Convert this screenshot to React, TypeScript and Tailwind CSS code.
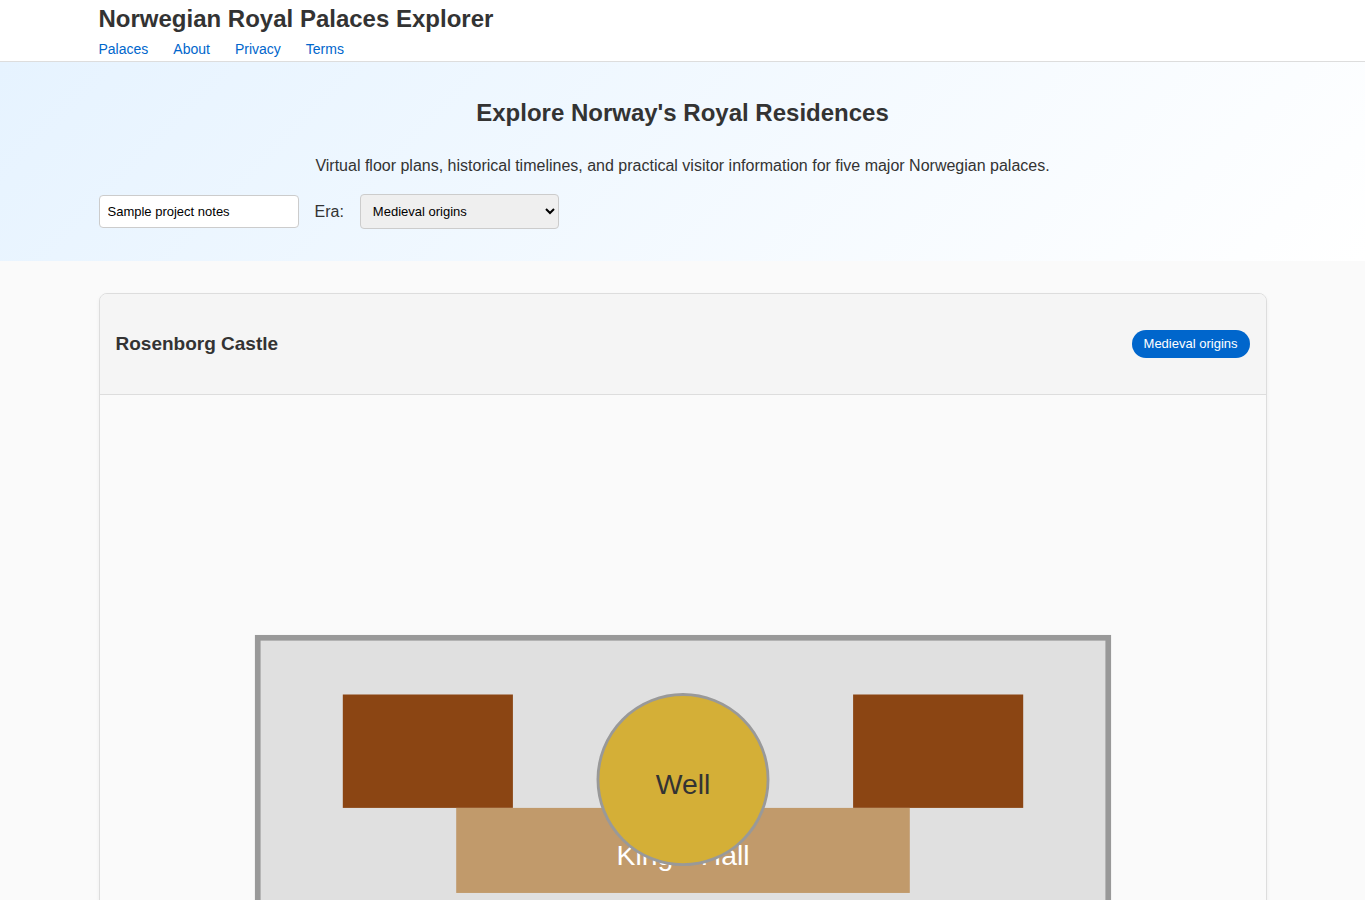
import { useState } from "react";

const NAV_LINKS = [
  { label: "Palaces", href: "#palaces" },
  { label: "About", href: "#about" },
  { label: "Privacy", href: "#privacy" },
  { label: "Terms", href: "#terms" },
];

const ERAS = ["Medieval origins", "Renaissance", "Baroque", "Modern era"];

function Header() {
  return (
    <header className="border-b border-[#dddddd] bg-white">
      <div className="mx-auto max-w-[1200px] px-4">
        <h1 className="text-2xl leading-[38px] font-bold">
          Norwegian Royal Palaces Explorer
        </h1>
        <nav className="flex gap-[25px] text-sm leading-[23px]">
          {NAV_LINKS.map((link) => (
            <a key={link.label} href={link.href} className="text-[#0066cc] hover:underline">
              {link.label}
            </a>
          ))}
        </nav>
      </div>
    </header>
  );
}

interface HeroProps {
  query: string;
  era: string;
  onQueryChange: (value: string) => void;
  onEraChange: (value: string) => void;
}

function Hero({ query, era, onQueryChange, onEraChange }: HeroProps) {
  return (
    <section className="bg-linear-[135deg] from-[#e6f3ff] to-white py-8">
      <div className="mx-auto max-w-[1200px] px-4">
        <h2 className="text-center text-2xl leading-[38px] font-bold">
          Explore Norway's Royal Residences
        </h2>
        <p className="mt-5 mb-3.5 text-center text-base leading-7">
          Virtual floor plans, historical timelines, and practical visitor information for five
          major Norwegian palaces.
        </p>
        <div className="flex flex-wrap items-center gap-4">
          <input
            type="text"
            aria-label="Search palaces"
            value={query}
            onChange={(e) => onQueryChange(e.target.value)}
            className="h-[33px] w-[200px] rounded border border-[#cccccc] bg-white px-2 text-[13px] text-black"
          />
          <label htmlFor="era" className="text-base leading-7">
            Era:
          </label>
          <select
            id="era"
            value={era}
            onChange={(e) => onEraChange(e.target.value)}
            className="h-[35px] w-[199px] rounded border border-[#cccccc] bg-[#efefef] px-2 text-[13px] text-black"
          >
            {ERAS.map((name) => (
              <option key={name}>{name}</option>
            ))}
          </select>
        </div>
      </div>
    </section>
  );
}

function FloorPlan() {
  return (
    <svg
      viewBox="0 0 400 300"
      className="block w-full"
      role="img"
      aria-label="Rosenborg Castle floor plan"
    >
      <rect x="50" y="80" width="300" height="200" fill="#e0e0e0" stroke="#999999" strokeWidth="2" />
      <rect x="80" y="100" width="60" height="40" fill="#8b4513" />
      <rect x="260" y="100" width="60" height="40" fill="#8b4513" />
      <rect x="120" y="140" width="160" height="30" fill="#c19a6b" />
      <text x="200" y="160" textAnchor="middle" fontSize="10" fill="#ffffff">
        King's Hall
      </text>
      {/* the well sits on top of the hall label */}
      <circle cx="200" cy="130" r="30" fill="#d4af37" stroke="#999999" strokeWidth="1" />
      <text x="200" y="135" textAnchor="middle" fontSize="10" fill="#333333">
        Well
      </text>
    </svg>
  );
}

function PalaceCard({ name, era }: { name: string; era: string }) {
  return (
    <article className="overflow-hidden rounded-lg border border-[#dddddd] bg-[#fafafa] shadow-[0_2px_4px_rgba(0,0,0,0.05)]">
      <div className="flex items-center justify-between border-b border-[#dddddd] bg-[#f5f5f5] px-4 py-[35px]">
        <h3 className="text-[19px] leading-[30px] font-bold">{name}</h3>
        <span className="rounded-full bg-[#0066cc] px-3 py-1 text-[13px] leading-5 text-white">
          {era}
        </span>
      </div>
      <div className="p-4">
        <FloorPlan />
      </div>
    </article>
  );
}

export default function App() {
  const [query, setQuery] = useState("Sample project notes");
  const [era, setEra] = useState(ERAS[0]);

  return (
    <div className="min-h-screen bg-[#fafafa] font-['Liberation_Sans',Arial,sans-serif] text-[#333333]">
      <Header />
      <Hero query={query} era={era} onQueryChange={setQuery} onEraChange={setEra} />
      <main className="mx-auto max-w-[1200px] px-4 py-8">
        <PalaceCard name="Rosenborg Castle" era={era} />
      </main>
    </div>
  );
}
